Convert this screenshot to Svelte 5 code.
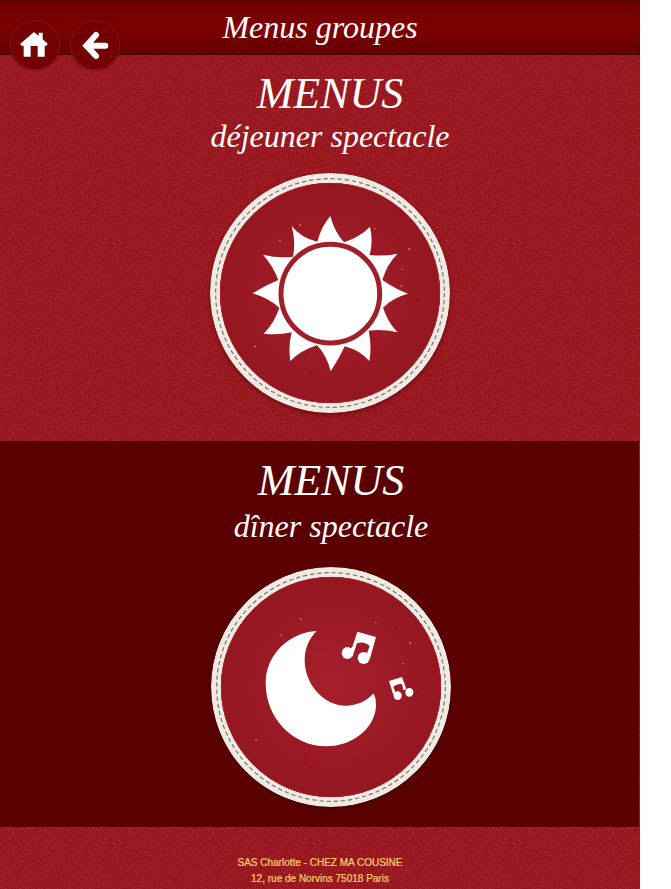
<script>
  const specks = [
    [300, 180, '#d98a86'], [240, 228, '#cf7a78'], [165, 544, '#e0a39c'],
    [628, 252, '#e6aaa2'], [606, 313, '#c9706e'], [604, 363, '#d98a86'],
    [584, 210, '#4c0c10'], [578, 139, '#5c0f14'], [652, 404, '#3d080b'],
    [314, 583, '#4c0c10'], [332, 624, '#5c0f14'], [221, 433, '#5c0f14'],
    [464, 592, '#5c0f14'], [524, 190, '#cf7a78']
  ];
</script>

{#snippet badge()}
  <circle cx="390" cy="384" r="345" fill="none" stroke="#efebe4" stroke-width="30" />
  <circle cx="390" cy="384" r="343" fill="none" stroke="#80705f" stroke-width="3.5" stroke-dasharray="13 8.55" />
  <circle cx="390" cy="384" r="330" fill="url(#cloth)" />
  <circle cx="390" cy="384" r="329" fill="none" stroke="#b01a2c" stroke-width="3" />
  {#each specks as [x, y, color]}
    <ellipse cx={x} cy={y} rx="3" ry="2" fill={color} />
  {/each}
{/snippet}

<div class="page">
  <header>
    <nav>
      <a href="#accueil" aria-label="Accueil">
        <svg viewBox="31 61 150 150" fill="#fff" aria-hidden="true">
          <path d="M103 97 L117 109 V99 H129 V119 L144 132 L141 138 H135 V171 H114 V139 H93 V171 H72 V138 H65 L62 132 Z" />
        </svg>
      </a>
      <a href="#retour" aria-label="Retour">
        <svg viewBox="211 61 150 150" aria-hidden="true">
          <path d="M317 138 H262 M289 106 L260 138 L289 169" fill="none" stroke="#fff" stroke-width="18" stroke-linecap="round" stroke-linejoin="miter" />
        </svg>
      </a>
    </nav>
    <h1>Menus groupes</h1>
  </header>

  <main>
    <a class="menu lunch" href="#dejeuner">
      <h2>MENUS</h2>
      <p>déjeuner spectacle</p>
      <svg class="badge" viewBox="30 24 720 720" aria-hidden="true">
        <defs>
          <radialGradient id="cloth">
            <stop offset="0" stop-color="#a6202c" />
            <stop offset="0.6" stop-color="#9c1a25" />
            <stop offset="1" stop-color="#941720" />
          </radialGradient>
        </defs>
        {@render badge()}
        <path
          fill="#fff"
          d="M352 230 Q364 184 391 153 Q404 202 432 232 Q480 216 510 185 Q520 230 509 270 Q553 275 593 266 Q561 297 547 345 Q586 372 624 386 Q578 398 549 428 Q564 473 593 502 Q545 491 506 497 Q516 545 508 588 Q480 556 434 544 Q422 572 392 619 Q380 571 351 541 Q304 555 271 588 Q264 545 275 502 Q234 511 191 506 Q224 472 238 428 Q205 398 158 385 Q194 362 235 345 Q219 302 189 269 Q234 280 279 275 Q288 228 275 183 Q303 219 352 230 Z"
        />
        <circle cx="391" cy="386" r="148" fill="#fff" stroke="#a11f2b" stroke-width="15" />
      </svg>
    </a>

    <a class="menu dinner" href="#diner">
      <h2>MENUS</h2>
      <p>dîner spectacle</p>
      <svg class="badge" viewBox="30 24 720 720" aria-hidden="true">
        {@render badge()}
        <g fill="#fff" transform="translate(-3 3)">
          <path d="M350 213 C264 218 197 286 197 370 C197 474 278 559 378 559 C462 559 528 500 528 435 Q528 415 521 400 C500 424 470 437 438 437 C370 437 314 372 314 300 C314 265 328 235 350 213 Z" />
          <path d="M472 215 L528 231 L509 299 L498 288 L509 258 Q492 242 471 250 L457 291 L448 268 L457 261 Z" />
          <ellipse cx="442" cy="279" rx="17" ry="18" />
          <ellipse cx="491" cy="294" rx="18" ry="18" />
          <path d="M567 363 L606 351 L619 387 L610 391 L606 373 Q592 370 580 380 L586 396 L580 405 Z" />
          <ellipse cx="593" cy="407" rx="12" ry="13" />
          <ellipse cx="628" cy="397" rx="12" ry="13" />
        </g>
      </svg>
    </a>
  </main>

  <footer>
    <p>SAS Charlotte - CHEZ MA COUSINE</p>
    <p>12, rue de Norvins 75018 Paris</p>
  </footer>
</div>

<style>
  :global(body) {
    margin: 0;
    background: #fff;
  }

  .page {
    --grain: url("data:image/svg+xml,%3Csvg xmlns='http://www.w3.org/2000/svg' width='200' height='200'%3E%3Cfilter id='n'%3E%3CfeTurbulence type='fractalNoise' baseFrequency='.6' numOctaves='3' stitchTiles='stitch'/%3E%3CfeColorMatrix values='0 0 0 0 1 0 0 0 0 .4 0 0 0 0 .4 .35 0 0 0 -.13'/%3E%3C/filter%3E%3Crect width='200' height='200' filter='url(%23n)'/%3E%3C/svg%3E");
    margin-right: 31px;
    background: var(--grain), #95121a;
    color: #fff;
    font-family: "Liberation Serif", serif;
  }

  header {
    position: relative;
    box-sizing: border-box;
    height: 55px;
    border-top: 1px solid #500000;
    border-bottom: 1px solid #3c0000;
    background: linear-gradient(#6c0000, #7e0000 50%, #640000);
  }

  nav {
    position: absolute;
    top: 19px;
    left: 10px;
    display: flex;
    gap: 10px;
  }

  nav a {
    width: 50px;
    height: 50px;
    border-radius: 50%;
    background: #740003;
    box-shadow: inset 0 0 0 1px #84161a, 0 0 2px #500000;
  }

  nav svg {
    display: block;
    width: 100%;
  }

  h1,
  h2,
  p {
    margin: 0;
    font-weight: normal;
  }

  h1,
  .menu {
    font-style: italic;
    text-align: center;
  }

  h1 {
    font-size: 32px;
    line-height: 53px;
  }

  .menu {
    display: flex;
    flex-direction: column;
    align-items: center;
    color: #fff;
    text-decoration: none;
  }

  h2 {
    font-size: 44px;
    line-height: 44px;
  }

  .menu p {
    font-size: 32px;
    line-height: 40px;
  }

  .badge {
    width: 240px;
    height: 240px;
    margin-top: 17px;
    border-radius: 50%;
    box-shadow: 0 2px 4px #3c000080;
  }

  .lunch {
    padding: 17px 0 28px 20px;
  }

  .dinner {
    margin-right: 1px;
    padding: 18px 0 20px 23px;
    background: #5a0000;
  }

  .dinner p {
    margin-top: 3px;
  }

  .dinner .badge {
    margin-top: 21px;
  }

  footer {
    padding: 28px 0 2px;
    color: #ffd36b;
    font-family: "Liberation Sans", Arial, sans-serif;
    font-size: 10px;
    line-height: 16px;
    text-align: center;
    -webkit-text-stroke: 0.2px #ffd36b;
  }
</style>
